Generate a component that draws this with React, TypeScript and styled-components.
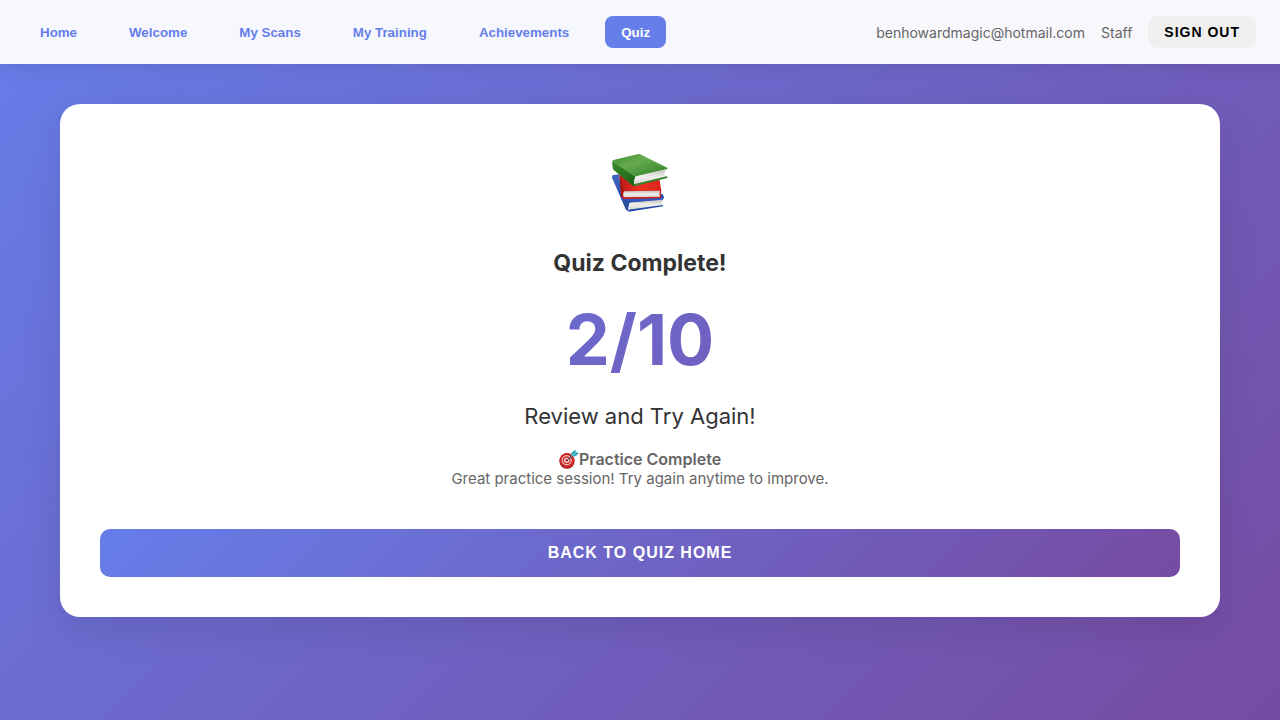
import React from "react";
import styled, { createGlobalStyle, css } from "styled-components";

const GlobalStyle = createGlobalStyle`
  * {
    box-sizing: border-box;
    margin: 0;
    padding: 0;
  }

  body {
    min-height: 100vh;
    background: linear-gradient(135deg, #667eea 0%, #764ba2 100%);
    background-attachment: fixed;
    color: #333;
    font-family: Inter, "Liberation Sans", sans-serif;
  }
`;

const TopBar = styled.header`
  display: flex;
  align-items: center;
  justify-content: space-between;
  padding: 16px 24px;
  background: rgba(255, 255, 255, 0.95);
  box-shadow: 0 2px 20px rgba(0, 0, 0, 0.1);
`;

const NavList = styled.nav`
  display: flex;
  gap: 20px;
`;

const NavButton = styled.button<{ $active?: boolean }>`
  height: 32px;
  padding: 0 16px;
  border: none;
  border-radius: 8px;
  background: none;
  color: #667eea;
  font-family: "Liberation Sans", Arial, sans-serif;
  font-weight: 600;
  cursor: pointer;

  ${({ $active }) =>
    $active &&
    css`
      background: #667eea;
      color: #fff;
    `}
`;

const UserArea = styled.div`
  display: flex;
  align-items: center;
  gap: 16px;
`;

const UserText = styled.span`
  color: #666;
  font-size: 14px;
  line-height: 17px;
`;

const ActionButton = styled.button`
  border: none;
  border-radius: 10px;
  font-family: "Liberation Sans", Arial, sans-serif;
  font-weight: 600;
  letter-spacing: 1px;
  text-transform: uppercase;
  cursor: pointer;
`;

const SignOutButton = styled(ActionButton)`
  height: 32px;
  padding: 0 16px;
  background: #efefef;
  color: #000;
  font-size: 14px;
`;

const PrimaryButton = styled(ActionButton)`
  width: 100%;
  height: 48px;
  margin-top: 40px;
  background: linear-gradient(135deg, #667eea 0%, #764ba2 100%);
  color: #fff;
  font-size: 16px;
`;

const Page = styled.main`
  max-width: 1200px;
  margin: 0 auto;
  padding: 40px 20px;
`;

const Card = styled.section`
  padding: 40px;
  border-radius: 20px;
  background: #fff;
  box-shadow: 0 10px 40px rgba(0, 0, 0, 0.1);
  text-align: center;
`;

const Badge = styled.div`
  display: flex;
  justify-content: center;
  padding: 7px 0 34px;
`;

const Title = styled.h1`
  font-size: 23px;
  font-weight: 700;
  line-height: 28px;
`;

const Score = styled.div`
  margin: 20px 0;
  background: linear-gradient(135deg, #667eea 0%, #764ba2 100%);
  background-clip: text;
  -webkit-background-clip: text;
  color: transparent;
  font-size: 70px;
  font-weight: 700;
  line-height: 86px;
`;

const Verdict = styled.p`
  font-size: 22px;
  line-height: 26px;
`;

const Summary = styled.div`
  margin-top: 20px;
  color: #666;
  font-size: 15px;
  line-height: 20px;
`;

const SummaryTitle = styled.div`
  display: flex;
  align-items: center;
  justify-content: center;
  font-size: 16px;
  font-weight: 600;
`;

const BooksIcon = () => (
  <svg width="64" height="64" viewBox="24 18 192 192" aria-hidden="true">
    <defs>
      <linearGradient id="greenCover" x1="0" y1="0" x2="1" y2="1">
        <stop offset="0" stopColor="#3f8f30" />
        <stop offset="0.4" stopColor="#67ab50" />
        <stop offset="1" stopColor="#2a7d22" />
      </linearGradient>
      <linearGradient id="greenSpine" x1="0" y1="0" x2="1" y2="1">
        <stop offset="0" stopColor="#3b8c2e" />
        <stop offset="1" stopColor="#176014" />
      </linearGradient>
      <linearGradient id="pages" x1="0" y1="0" x2="0" y2="1">
        <stop offset="0" stopColor="#c4c2be" />
        <stop offset="0.5" stopColor="#f6f5f2" />
        <stop offset="1" stopColor="#d5d3cf" />
      </linearGradient>
      <linearGradient id="redCover" x1="0" y1="0" x2="1" y2="0">
        <stop offset="0" stopColor="#ba1b16" />
        <stop offset="0.5" stopColor="#ed3023" />
        <stop offset="1" stopColor="#d9241b" />
      </linearGradient>
      <linearGradient id="blueSpine" x1="0" y1="0" x2="1" y2="1">
        <stop offset="0" stopColor="#4166c5" />
        <stop offset="1" stopColor="#183888" />
      </linearGradient>
    </defs>
    <path d="M37 91L57 88L68 154L188 147L192 158L187 166L88 174L83 199L77 193L36 98Z" fill="url(#blueSpine)" />
    <path d="M70 157L191 154L187 166L90 172Z" fill="#3157ba" />
    <path d="M89 173L187 164Q184 174 187 181L89 195Q85 184 89 173Z" fill="url(#pages)" />
    <path d="M83 194L188 180L190 184L86 200Z" fill="#244aa9" />
    <path d="M60 85L102 118L178 102L184 136L182 159L69 161L64 154L58 91Z" fill="url(#redCover)" />
    <path d="M60 88L71 138L67 160L63 153Z" fill="#a71713" />
    <path d="M72 139L180 137Q176 147 180 156L71 158Q67 148 72 139Z" fill="url(#pages)" />
    <path d="M69 157L183 155L184 159L69 161Z" fill="#c91f19" />
    <path d="M37 48Q37 45 43 44L112 28Q118 26 125 30L203 69Q204 72 199 73L108 94Q101 96 95 91Z" fill="url(#greenCover)" />
    <path d="M37 48L98 91Q103 95 107 94Q100 109 103 123L98 122L41 75Q36 69 37 48Z" fill="url(#greenSpine)" />
    <path d="M107 95L197 74Q191 86 196 96L103 119Q100 105 107 95Z" fill="url(#pages)" />
    <path d="M101 118L200 94Q204 96 202 99L103 124Z" fill="#32832a" />
    <path d="M106 102L193 82M105 109L192 89M73 145L177 142M72 151L177 149M90 181L184 170M89 188L184 176" fill="none" stroke="#bbb9b5" strokeWidth="1" opacity="0.65" />
  </svg>
);

const TargetIcon = () => (
  <svg width="20" height="20" viewBox="0 0 60 60" aria-hidden="true">
    <ellipse cx="24" cy="36" rx="23" ry="23" fill="#9f1717" />
    <circle cx="24" cy="34" r="22" fill="#cf2927" />
    <circle cx="23" cy="34" r="15" fill="#f6e8e5" />
    <circle cx="23" cy="34" r="12" fill="#cb2725" />
    <circle cx="23" cy="34" r="8" fill="#f6e8e5" />
    <circle cx="23" cy="34" r="4" fill="#c91f20" />
    <path d="M24 34L43 17" stroke="#59636a" strokeWidth="4" />
    <path d="M37 22L37 12L49 2L51 10L60 12L50 22Z" fill="#35a5b8" />
    <path d="M39 20L55 8" stroke="#7ed6e0" strokeWidth="3" />
  </svg>
);

const navItems = ["Home", "Welcome", "My Scans", "My Training", "Achievements", "Quiz"];

export default function App() {
  return (
    <>
      <GlobalStyle />
      <TopBar>
        <NavList aria-label="Main">
          {navItems.map((item) => (
            <NavButton
              key={item}
              type="button"
              $active={item === "Quiz"}
              aria-current={item === "Quiz" ? "page" : undefined}
            >
              {item}
            </NavButton>
          ))}
        </NavList>
        <UserArea>
          <UserText>benhowardmagic@hotmail.com</UserText>
          <UserText>Staff</UserText>
          <SignOutButton type="button">Sign Out</SignOutButton>
        </UserArea>
      </TopBar>
      <Page>
        <Card>
          <Badge>
            <BooksIcon />
          </Badge>
          <Title>Quiz Complete!</Title>
          <Score>2/10</Score>
          <Verdict>Review and Try Again!</Verdict>
          <Summary>
            <SummaryTitle>
              <TargetIcon />
              Practice Complete
            </SummaryTitle>
            <p>Great practice session! Try again anytime to improve.</p>
          </Summary>
          <PrimaryButton type="button">Back to Quiz Home</PrimaryButton>
        </Card>
      </Page>
    </>
  );
}
